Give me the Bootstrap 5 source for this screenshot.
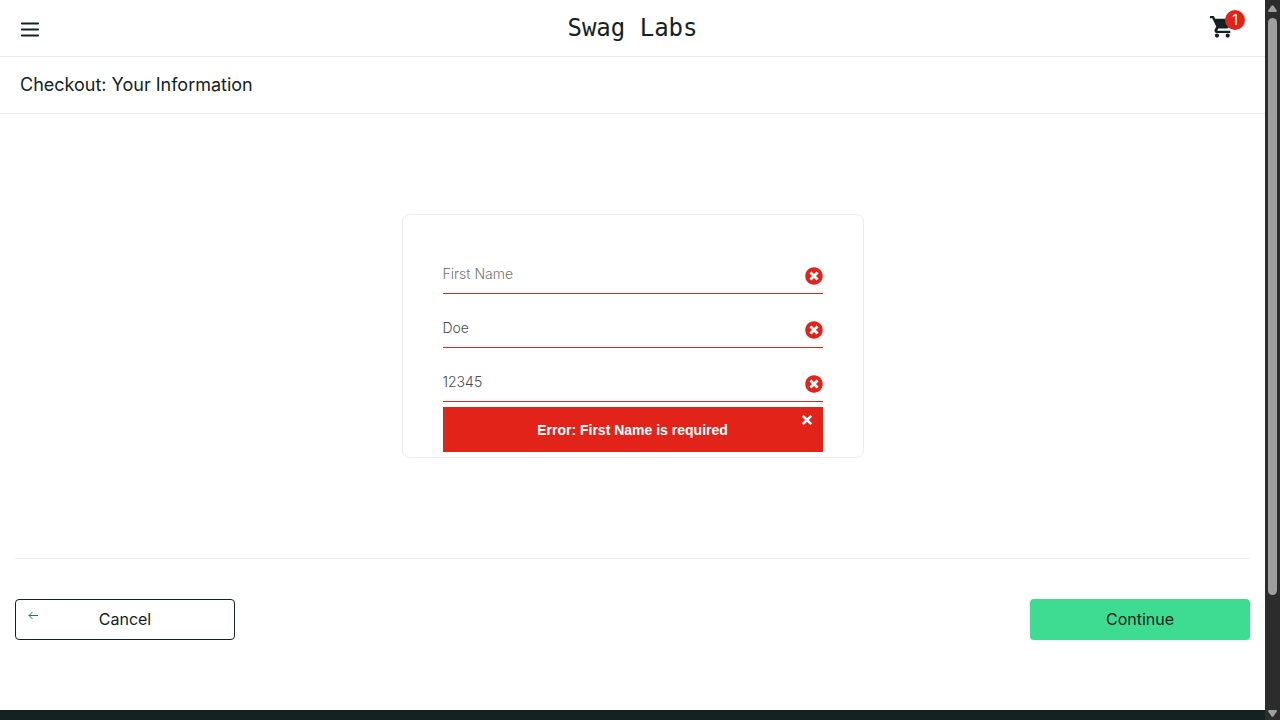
<!DOCTYPE html>
<html lang="en">
<head>
<meta charset="utf-8">
<meta name="viewport" content="width=device-width, initial-scale=1">
<title>Swag Labs</title>
<link href="https://cdn.jsdelivr.net/npm/bootstrap@5.3.0/dist/css/bootstrap.min.css" rel="stylesheet">
<style>
:root { --ink: #132322; --line: #ededed; --alert: #e2231a; --mint: #3ddc91; }
body { font-family: Inter, Roboto, sans-serif; color: var(--ink); }
.icon-btn { background: none; border: 0; padding: 0; line-height: 0; color: inherit; }
.topbar { height: 57px; padding: 0 20px; border-bottom: 1px solid var(--line); display: grid; grid-template-columns: 40px 1fr 40px; align-items: center; }
.menu-btn { padding-top: 4px; }
.brand { font: 24px/32px "DejaVu Sans Mono", monospace; text-align: center; }
.cart { width: 35px; height: 36px; justify-self: end; }
.cart-count { top: 0; right: 0; width: 20px; height: 20px; border-radius: 50%; background: var(--alert); color: #fff; font-size: 14px; line-height: 20px; text-align: center; }
.page-title { height: 57px; padding: 0 20px; border-bottom: 1px solid var(--line); }
.page-title h1 { font-size: 18px; font-weight: 400; line-height: 24px; }
.info-box { max-width: 462px; margin: 100px auto; padding: 40px 40px 5px; border: 1px solid var(--line); border-radius: 8px; }
.fields { display: grid; gap: 15px; margin-bottom: 5px; }
.fields input { border: 0; border-bottom: 1px solid var(--alert); border-radius: 0; padding: 0 24px 2px 0; height: 39px; font-size: 14px; font-weight: 300; color: #484c55; }
.fields input::placeholder { color: #757575; }
.field-mark { right: 0; top: 12px; color: var(--alert); }
.error-bar { height: 45px; background: var(--alert); color: #fff; }
.error-bar h3 { font: bold 14px/20px "Liberation Sans", Arial, sans-serif; }
.error-bar .icon-btn { top: 6px; right: 11px; }
.actions { margin: 0 15px; padding: 40px 0 70px; border-top: 1px solid var(--line); }
.action { width: 220px; height: 41px; border-radius: 4px; font-size: 16px; padding: 0 0 2px; color: var(--ink); }
.action-cancel, .action-cancel:hover { border: 1px solid var(--ink); background: #fff; }
.action-go, .action-go:hover { border: 0; background: var(--mint); }
.back-arrow { left: 12px; top: 10px; }
.site-footer { background: var(--ink); color: #fff; padding: 40px 20px; }
.scroll-rail { width: 15px; background: #2c2c2c; color: #9f9f9f; padding: 5px 3px 3px; }
.scroll-thumb { width: 9px; height: 81%; border-radius: 5px; background: currentColor; margin-top: 6px; }
</style>
</head>
<body>
<svg class="d-none" aria-hidden="true">
  <symbol id="cross" viewBox="0 0 352 512"><path fill="currentColor" d="M242.72 256l100.07-100.07c12.28-12.28 12.28-32.19 0-44.48l-22.24-22.24c-12.28-12.28-32.19-12.28-44.48 0L176 189.28 75.93 89.21c-12.28-12.28-32.19-12.28-44.48 0L9.21 111.45c-12.28 12.28-12.28 32.19 0 44.48L109.28 256 9.21 356.07c-12.28 12.28-12.28 32.19 0 44.48l22.24 22.24c12.28 12.28 32.2 12.28 44.48 0L176 322.72l100.07 100.07c12.28 12.28 32.2 12.28 44.48 0l22.24-22.24c12.28-12.28 12.28-32.19 0-44.48L242.72 256z"/></symbol>
  <symbol id="cross-circle" viewBox="0 0 512 512"><path fill="currentColor" d="M256 8C119 8 8 119 8 256s111 248 248 248 248-111 248-248S393 8 256 8zm121.600 313.100c4.700 4.700 4.700 12.300 0 17L338 377.600c-4.700 4.700-12.300 4.700-17 0L256 312l-65.100 65.600c-4.700 4.700-12.300 4.700-17 0L134.400 338c-4.700-4.700-4.700-12.300 0-17l65.600-65-65.600-65.100c-4.700-4.700-4.700-12.300 0-17l39.600-39.600c4.700-4.700 12.300-4.700 17 0l65 65.700 65.100-65.600c4.700-4.700 12.300-4.700 17 0l39.600 39.600c4.700 4.700 4.700 12.300 0 17L312 256l65.600 65.100z"/></symbol>
</svg>
<div class="d-flex vh-100 overflow-hidden">
  <div class="flex-grow-1 overflow-hidden">
    <header>
      <div class="topbar">
        <button class="icon-btn menu-btn text-start" type="button" aria-label="Open menu">
          <svg width="20" height="20" viewBox="0 0 20 20"><path d="M2 4h16M2 10h16M2 16h16" transform="translate(0 -.5)" stroke="currentColor" stroke-width="2.200" stroke-linecap="round"/></svg>
        </button>
        <div class="brand">Swag Labs</div>
        <a class="cart position-relative d-block text-reset" href="#" aria-label="Shopping cart, 1 item">
          <svg class="d-block" width="24" height="34" viewBox="0 0 24 34"><path fill="currentColor" transform="translate(0 5)" d="M7 18.500a2.100 2.100 0 1 0 0 4.200 2.100 2.100 0 0 0 0-4.200zM0 1v2.200h2.300l4 8.500-1.600 2.800c-.8 1.600.3 3.500 2.100 3.500h13.500v-2.200H7.200l1.200-2.200h8.300c.8 0 1.500-.4 1.900-1.100L22.600 5.500c.4-.8-.1-1.800-1-1.800H5.200L3.800 1zm17.700 17.500a2.100 2.100 0 1 0 0 4.200 2.100 2.100 0 0 0 0-4.200z"/></svg>
          <span class="cart-count position-absolute">1</span>
        </a>
      </div>
      <div class="page-title d-flex align-items-center"><h1 class="m-0">Checkout: Your Information</h1></div>
    </header>
    <main>
      <form>
        <div class="info-box">
          <div class="fields">
            <div class="position-relative">
              <input class="form-control shadow-none" type="text" placeholder="First Name" aria-label="First Name">
              <svg class="field-mark position-absolute" width="18" height="18"><use href="#cross-circle"/></svg>
            </div>
            <div class="position-relative">
              <input class="form-control shadow-none" type="text" value="Doe" aria-label="Last Name">
              <svg class="field-mark position-absolute" width="18" height="18"><use href="#cross-circle"/></svg>
            </div>
            <div class="position-relative">
              <input class="form-control shadow-none" type="text" value="12345" aria-label="Zip/Postal Code">
              <svg class="field-mark position-absolute" width="18" height="18"><use href="#cross-circle"/></svg>
            </div>
          </div>
          <div class="error-bar position-relative d-flex align-items-center justify-content-center" role="alert">
            <h3 class="m-0">Error: First Name is required</h3>
            <button class="icon-btn position-absolute" type="button" aria-label="Dismiss"><svg width="10" height="14"><use href="#cross"/></svg></button>
          </div>
        </div>
        <div class="actions d-flex justify-content-between">
          <button class="btn action action-cancel position-relative" type="button">
            <svg class="back-arrow position-absolute" width="12" height="12" viewBox="0 0 12 12" fill="none" stroke="#28795a"><path d="M1 5.500h9M4.500 2 1 5.500 4.500 9"/></svg>
            Cancel
          </button>
          <button class="btn action action-go" type="submit">Continue</button>
        </div>
      </form>
    </main>
    <footer class="site-footer"></footer>
  </div>
  <div class="scroll-rail d-flex flex-column flex-shrink-0 align-items-center" aria-hidden="true">
    <svg width="9" height="7" viewBox="0 0 9 7"><path fill="currentColor" d="M3.500.8q1-1.200 2 0L8.800 5.500Q9 7 8 7H1Q0 7 .2 5.500z"/></svg>
    <div class="scroll-thumb"></div>
    <svg class="mt-auto" width="9" height="7" viewBox="0 0 9 7"><path fill="currentColor" d="M3.500 6.200q1 1.200 2 0L8.800 1.500Q9 0 8 0H1Q0 0 .2 1.500z"/></svg>
  </div>
</div>
<script src="https://cdn.jsdelivr.net/npm/bootstrap@5.3.0/dist/js/bootstrap.bundle.min.js"></script>
</body>
</html>
